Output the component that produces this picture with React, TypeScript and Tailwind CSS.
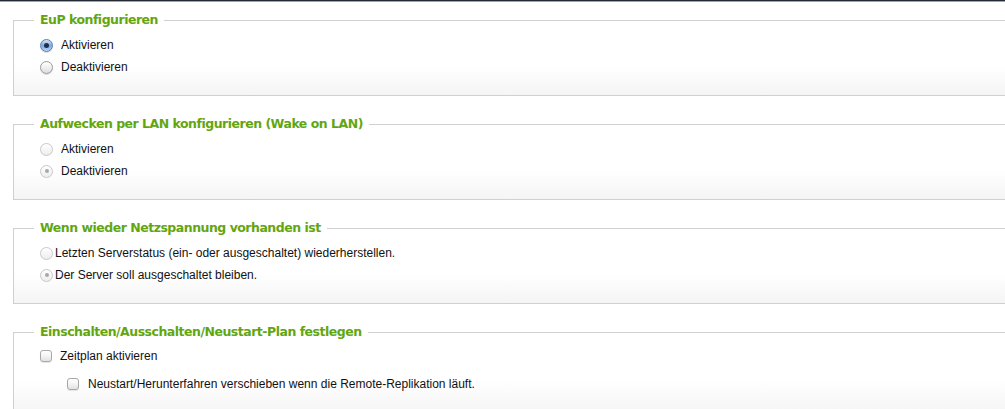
import React from "react";

type RadioProps = { checked?: boolean; disabled?: boolean };

function Radio({ checked, disabled }: RadioProps) {
  if (!disabled && checked) {
    return (
      <span className="relative flex h-[13px] w-[13px] shrink-0 items-center justify-center rounded-full border border-[#5a7fb5] bg-gradient-to-b from-[#d7e6f7] via-[#7fa9df] to-[#b6d2f3] shadow-[0_1px_1px_rgba(0,0,0,0.15)]">
        <span className="h-[5px] w-[5px] rounded-full bg-[#1c2f4d]" />
      </span>
    );
  }
  if (!disabled) {
    return (
      <span className="flex h-[13px] w-[13px] shrink-0 rounded-full border border-[#9a9a9a] bg-gradient-to-b from-[#ffffff] via-[#f0f0f0] to-[#dcdcdc] shadow-[0_1px_1px_rgba(0,0,0,0.12)]" />
    );
  }
  return (
    <span className="flex h-[13px] w-[13px] shrink-0 items-center justify-center rounded-full border border-[#c8c8c8] bg-gradient-to-b from-[#ffffff] to-[#ededed]">
      {checked && <span className="h-[4px] w-[4px] rounded-full bg-[#a8a8a8]" />}
    </span>
  );
}

function Checkbox() {
  return (
    <span className="flex h-[12px] w-[12px] shrink-0 rounded-[3px] border border-[#a8a8a8] bg-gradient-to-b from-[#ffffff] via-[#f4f4f4] to-[#e2e2e2] shadow-[0_1px_1px_rgba(0,0,0,0.1)]" />
  );
}

function Section({ title, children, last }: { title: string; children: React.ReactNode; last?: boolean }) {
  return (
    <fieldset
      className={`ml-[13px] mr-[-20px] border border-[#d0d0d0] bg-gradient-to-b from-white from-60% to-[#f5f5f5] pb-[17px] ${
        last ? "" : "mb-[20px]"
      }`}
    >
      <legend className="ml-[20px] px-[6px] text-[12.5px] font-bold leading-[16px] tracking-[-0.5px] text-[#62a60f] [font-family:'DejaVu_Sans',Verdana,sans-serif]">
        {title}
      </legend>
      <div className="pt-[6px]">{children}</div>
    </fieldset>
  );
}

function Row({ children, gap = "gap-[8px]", indent = "pl-[26px]" }: { children: React.ReactNode; gap?: string; indent?: string }) {
  return <div className={`flex h-[22px] items-center ${gap} ${indent}`}>{children}</div>;
}

export default function App() {
  return (
    <div className="h-[409px] w-[1005px] overflow-hidden bg-white text-[12px] text-[#111] [font-family:'Liberation_Sans',Arial,sans-serif]">
      <div className="h-[1px] bg-[#232a36]" />
      <div className="h-[1px] bg-[#8fa4c7]" />
      <div className="pt-[10px]">
        <Section title="EuP konfigurieren">
          <Row>
            <Radio checked />
            <span>Aktivieren</span>
          </Row>
          <Row>
            <Radio />
            <span>Deaktivieren</span>
          </Row>
        </Section>

        <Section title="Aufwecken per LAN konfigurieren (Wake on LAN)">
          <Row>
            <Radio disabled />
            <span>Aktivieren</span>
          </Row>
          <Row>
            <Radio disabled checked />
            <span>Deaktivieren</span>
          </Row>
        </Section>

        <Section title="Wenn wieder Netzspannung vorhanden ist">
          <Row gap="gap-[2px]">
            <Radio disabled />
            <span>Letzten Serverstatus (ein- oder ausgeschaltet) wiederherstellen.</span>
          </Row>
          <Row gap="gap-[2px]">
            <Radio disabled checked />
            <span>Der Server soll ausgeschaltet bleiben.</span>
          </Row>
        </Section>

        <Section title="Einschalten/Ausschalten/Neustart-Plan festlegen" last>
          <div className="-mt-[1px]">
            <Row>
              <Checkbox />
              <span>Zeitplan aktivieren</span>
            </Row>
            <div className="mt-[6px]">
              <Row indent="pl-[53px]" gap="gap-[9px]">
                <Checkbox />
                <span>Neustart/Herunterfahren verschieben wenn die Remote-Replikation läuft.</span>
              </Row>
            </div>
          </div>
        </Section>
      </div>
    </div>
  );
}
